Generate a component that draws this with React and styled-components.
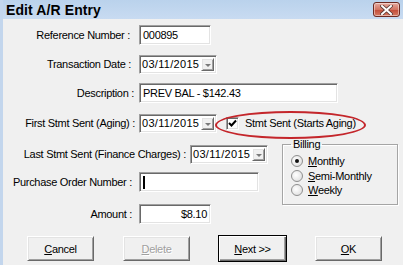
import React from "react";
import styled, { createGlobalStyle } from "styled-components";

const Global = createGlobalStyle`
  html, body { margin: 0; padding: 0; background: #f0f0f0; }
  body {
    font-family: "Liberation Sans", Arial, sans-serif;
    font-size: 11px;
    letter-spacing: -0.3px;
    color: #000;
  }
`;

const sunken = `
  border: 1px solid;
  border-color: #a0a0a0 #ffffff #ffffff #a0a0a0;
  box-shadow: inset 1px 1px #696969, inset -1px -1px #e3e3e3;
`;

const raised = `
  border: 1px solid;
  border-color: #ffffff #696969 #696969 #ffffff;
  box-shadow: inset 1px 1px #e3e3e3, inset -1px -1px #a0a0a0;
`;

const Window = styled.div`
  width: 403px;
  height: 265px;
  overflow: hidden;
  border-left: 3px solid #c3d6ed;
  box-sizing: border-box;
  background: #f0f0f0;
  display: flex;
  flex-direction: column;
`;

const TitleBar = styled.div`
  height: 19px;
  flex: none;
  display: flex;
  align-items: center;
  justify-content: space-between;
  padding: 0 3px 0 3px;
  background: linear-gradient(#bad2ec, #c8dbf1);
`;

const Title = styled.div`
  font-size: 14px;
  font-weight: bold;
  letter-spacing: 0.1px;
  padding-top: 1px;
`;

const CloseBtn = styled.div`
  width: 25px;
  height: 13px;
  border: 1px solid #6d2a22;
  border-radius: 3px;
  background: linear-gradient(#e6aba1, #d27462 50%, #c24a37 51%, #d57a62);
  display: flex;
  align-items: center;
  justify-content: center;
  box-shadow: inset 0 0 0 1px rgba(255, 255, 255, 0.45);
`;

const Body = styled.div`
  display: flex;
  flex-direction: column;
`;

const Row = styled.div`
  display: flex;
  align-items: center;
  height: 20px;
  margin-top: ${p => p.mt}px;
`;

const Label = styled.div`
  width: ${p => p.w}px;
  text-align: right;
  white-space: nowrap;
  flex: none;
  margin-right: ${p => p.gap ?? 3}px;
`;

const TextBox = styled.div`
  ${sunken};
  box-sizing: border-box;
  width: ${p => p.w}px;
  height: 20px;
  background: #fff;
  display: flex;
  align-items: center;
  justify-content: ${p => (p.right ? "flex-end" : "flex-start")};
  padding: 0 3px;
  white-space: nowrap;
  overflow: hidden;
`;

const Caret = styled.span`
  width: 2px;
  height: 13px;
  background: #000;
`;

const Combo = styled.div`
  ${sunken};
  box-sizing: border-box;
  width: ${p => p.w}px;
  height: 19px;
  background: #fff;
  display: flex;
  align-items: stretch;
  padding: 2px;
`;

const ComboText = styled.div`
  flex: 1;
  display: flex;
  align-items: center;
  padding-left: 0;
  letter-spacing: 0.3px;
`;

const DropBtn = styled.div`
  ${raised};
  width: 11px;
  background: #f0f0f0;
  display: flex;
  align-items: center;
  justify-content: center;
`;

const Arrow = styled.span`
  width: 0;
  height: 0;
  border-left: 3px solid transparent;
  border-right: 3px solid transparent;
  border-top: 3px solid #7a7a7a;
  margin-top: 2px;
`;

const CheckWrap = styled.div`
  position: relative;
  display: flex;
  align-items: center;
  margin-left: 9px;
`;

const CheckBox = styled.div`
  ${sunken};
  width: 11px;
  height: 11px;
  background: #fff;
  display: flex;
  align-items: center;
  justify-content: center;
  margin-right: 6px;
`;

const Ellipse = styled.div`
  position: absolute;
  left: -11px;
  top: -6px;
  width: 151px;
  height: 28px;
  border: 2px solid #c4262b;
  border-radius: 50%;
  box-sizing: border-box;
  pointer-events: none;
`;

const Lower = styled.div`
  display: flex;
  align-items: flex-start;
`;

const LeftCol = styled.div`
  width: 276px;
  flex: none;
  display: flex;
  flex-direction: column;
`;

const Group = styled.fieldset`
  margin: 5px 0 0 3px;
  padding: 4px 0 0 8px;
  width: 116px;
  height: 67px;
  box-sizing: border-box;
  border: 1px solid #a5a5a5;
  box-shadow: 1px 1px #fff, inset 1px 1px #fff;
  display: flex;
  flex-direction: column;
  min-inline-size: 0;
`;

const Legend = styled.legend`
  padding: 0 2px;
  margin-left: 0;
  line-height: 12px;
`;

const RadioRow = styled.div`
  display: flex;
  align-items: center;
  height: 14.5px;
`;

const Radio = styled.span`
  width: 10px;
  height: 10px;
  border-radius: 50%;
  border: 1px solid #8f8f8f;
  background: radial-gradient(circle at 40% 40%, #ffffff, #e4e4e4 70%, #cfcfcf);
  display: flex;
  align-items: center;
  justify-content: center;
  margin-right: 5px;
  flex: none;
`;

const Dot = styled.span`
  width: 4px;
  height: 4px;
  border-radius: 50%;
  background: #111;
`;

const Buttons = styled.div`
  display: flex;
  gap: 29px;
  padding-left: 24px;
  margin-top: 11px;
  align-items: center;
`;

const Button = styled.div`
  ${raised};
  box-sizing: border-box;
  width: ${p => (p.def ? 69 : 67)}px;
  height: ${p => (p.def ? 27 : 25)}px;
  margin: ${p => (p.def ? "0 -1px" : "0")};
  ${p =>
    p.def &&
    "border-color: #000; box-shadow: inset 1px 1px #fff, inset -1px -1px #696969, inset -2px -2px #a0a0a0;"}
  display: flex;
  align-items: center;
  justify-content: center;
  color: ${p => (p.disabled ? "#a0a0a0" : "#000")};
  text-shadow: ${p => (p.disabled ? "1px 1px #fff" : "none")};
`;

const U = styled.span`
  text-decoration: underline;
`;

const CloseIcon = () => (
  <svg width="13" height="10" viewBox="0 0 13 10">
    <path d="M2 1 L11 9 M11 1 L2 9" stroke="#5a3a36" strokeWidth="3.6" strokeLinecap="square" />
    <path d="M2 1 L11 9 M11 1 L2 9" stroke="#ffffff" strokeWidth="2" strokeLinecap="square" />
  </svg>
);

const Check = () => (
  <svg width="9" height="9" viewBox="0 0 9 9">
    <path d="M1 4 L3.5 6.5 L8 1.5" stroke="#000" strokeWidth="2" fill="none" />
  </svg>
);

const DateCombo = ({ w, value }) => (
  <Combo w={w}>
    <ComboText>{value}</ComboText>
    <DropBtn>
      <Arrow />
    </DropBtn>
  </Combo>
);

const RadioOpt = ({ checked, mn, rest }) => (
  <RadioRow>
    <Radio>{checked && <Dot />}</Radio>
    <span>
      <U>{mn}</U>
      {rest}
    </span>
  </RadioRow>
);

export default function App() {
  return (
    <>
      <Global />
      <Window>
        <TitleBar>
          <Title>Edit A/R Entry</Title>
          <CloseBtn>
            <CloseIcon />
          </CloseBtn>
        </TitleBar>
        <Body>
          <Row mt={6}>
            <Label w={127} gap={9}>Reference Number :</Label>
            <TextBox w={72}>000895</TextBox>
          </Row>
          <Row mt={9}>
            <Label w={128} gap={8}>Transaction Date :</Label>
            <DateCombo w={78} value="03/11/2015" />
          </Row>
          <Row mt={9}>
            <Label w={131} gap={5}>Description :</Label>
            <TextBox w={199}>PREV BAL - $142.43</TextBox>
          </Row>
          <Row mt={10}>
            <Label w={132} gap={4}>First Stmt Sent (Aging) :</Label>
            <DateCombo w={78} value="03/11/2015" />
            <CheckWrap>
              <Ellipse />
              <CheckBox>
                <Check />
              </CheckBox>
              <span>Stmt Sent (Starts Aging)</span>
            </CheckWrap>
          </Row>
          <Lower>
            <LeftCol>
              <Row mt={11}>
                <Label w={183} gap={4}>Last Stmt Sent (Finance Charges) :</Label>
                <DateCombo w={78} value="03/11/2015" />
              </Row>
              <Row mt={8}>
                <Label w={129} gap={7}>Purchase Order Number :</Label>
                <TextBox w={120}>
                  <Caret />
                </TextBox>
              </Row>
              <Row mt={12}>
                <Label w={129} gap={7}>Amount :</Label>
                <TextBox w={72} right>
                  $8.10
                </TextBox>
              </Row>
            </LeftCol>
            <Group>
              <Legend>Billing</Legend>
              <RadioOpt checked mn="M" rest="onthly" />
              <RadioOpt mn="S" rest="emi-Monthly" />
              <RadioOpt mn="W" rest="eekly" />
            </Group>
          </Lower>
          <Buttons>
            <Button>
              <span>
                <U>C</U>ancel
              </span>
            </Button>
            <Button disabled>
              <span>
                <U>D</U>elete
              </span>
            </Button>
            <Button def>
              <span>
                <U>N</U>ext &gt;&gt;
              </span>
            </Button>
            <Button>
              <span>
                <U>O</U>K
              </span>
            </Button>
          </Buttons>
        </Body>
      </Window>
    </>
  );
}
